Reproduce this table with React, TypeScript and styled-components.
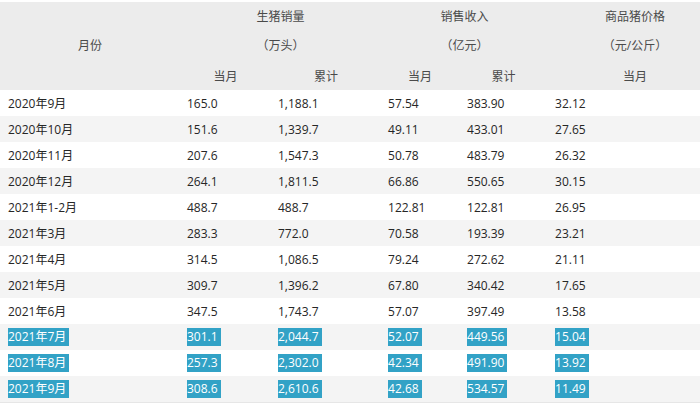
import React from 'react';
import styled, { createGlobalStyle } from 'styled-components';

const GlobalStyle = createGlobalStyle`
  html, body {
    margin: 0;
    padding: 0;
    overflow: hidden;
    background: #fff;
  }
  body {
    font-family: "Open Sans", "Noto Sans CJK SC", sans-serif;
    font-size: 12px;
    color: #262626;
  }
`;

const Page = styled.div`
  width: 700px;
  height: 411px;
  padding-top: 2px;
  box-sizing: border-box;
  overflow: hidden;
`;

const Table = styled.table`
  width: 722px;
  table-layout: fixed;
  border-collapse: collapse;
  border-bottom: 1px solid #e6e6e6;
`;

const Head = styled.thead`
  background: #ececec;
  color: #4a4a4a;
`;

const HeadCell = styled.th<{ $h: number; $pt?: number }>`
  height: ${(p) => p.$h}px;
  padding: ${(p) => p.$pt ?? 0}px 0 0 0;
  box-sizing: border-box;
  font-weight: normal;
  text-align: center;
  vertical-align: middle;
  line-height: 16px;
`;

const Row = styled.tr`
  height: 26px;
  &:nth-child(even) {
    background: #f4f4f4;
  }
`;

const Cell = styled.td<{ $pl: number }>`
  padding: 0 0 0 ${(p) => p.$pl}px;
  line-height: 17px;
  vertical-align: middle;
  white-space: nowrap;
`;

const Picked = styled.span`
  background: #32a2c6;
  color: #fff;
  padding-right: 3px;
  display: inline-block;
  line-height: 18px;
`;

const widths = [180, 91, 110, 78, 89, 174];
const pads = [8, 7, 7, 7, 8, 7];

const rows: [string, string, string, string, string, string, boolean][] = [
  ['2020年9月', '165.0', '1,188.1', '57.54', '383.90', '32.12', false],
  ['2020年10月', '151.6', '1,339.7', '49.11', '433.01', '27.65', false],
  ['2020年11月', '207.6', '1,547.3', '50.78', '483.79', '26.32', false],
  ['2020年12月', '264.1', '1,811.5', '66.86', '550.65', '30.15', false],
  ['2021年1-2月', '488.7', '488.7', '122.81', '122.81', '26.95', false],
  ['2021年3月', '283.3', '772.0', '70.58', '193.39', '23.21', false],
  ['2021年4月', '314.5', '1,086.5', '79.24', '272.62', '21.11', false],
  ['2021年5月', '309.7', '1,396.2', '67.80', '340.42', '17.65', false],
  ['2021年6月', '347.5', '1,743.7', '57.07', '397.49', '13.58', false],
  ['2021年7月', '301.1', '2,044.7', '52.07', '449.56', '15.04', true],
  ['2021年8月', '257.3', '2,302.0', '42.34', '491.90', '13.92', true],
  ['2021年9月', '308.6', '2,610.6', '42.68', '534.57', '11.49', true],
];

export default function App() {
  return (
    <Page>
      <GlobalStyle />
      <Table>
        <colgroup>
          {widths.map((w, i) => (
            <col key={i} style={{ width: w }} />
          ))}
        </colgroup>
        <Head>
          <tr>
            <HeadCell $h={30} rowSpan={3}>
              月份
            </HeadCell>
            <HeadCell $h={30} colSpan={2}>
              生猪销量
            </HeadCell>
            <HeadCell $h={30} colSpan={2}>
              销售收入
            </HeadCell>
            <HeadCell $h={30}>商品猪价格</HeadCell>
          </tr>
          <tr>
            <HeadCell $h={27} colSpan={2}>
              （万头）
            </HeadCell>
            <HeadCell $h={27} colSpan={2}>
              （亿元）
            </HeadCell>
            <HeadCell $h={27}>（元/公斤）</HeadCell>
          </tr>
          <tr>
            <HeadCell $h={31} $pt={4}>当月</HeadCell>
            <HeadCell $h={31} $pt={4}>累计</HeadCell>
            <HeadCell $h={31} $pt={4}>当月</HeadCell>
            <HeadCell $h={31} $pt={4}>累计</HeadCell>
            <HeadCell $h={31} $pt={4}>当月</HeadCell>
          </tr>
        </Head>
        <tbody>
          {rows.map((r) => (
            <Row key={r[0]}>
              {r.slice(0, 6).map((v, i) => (
                <Cell key={i} $pl={pads[i]}>
                  {r[6] ? <Picked>{v as string}</Picked> : v}
                </Cell>
              ))}
            </Row>
          ))}
        </tbody>
      </Table>
    </Page>
  );
}
